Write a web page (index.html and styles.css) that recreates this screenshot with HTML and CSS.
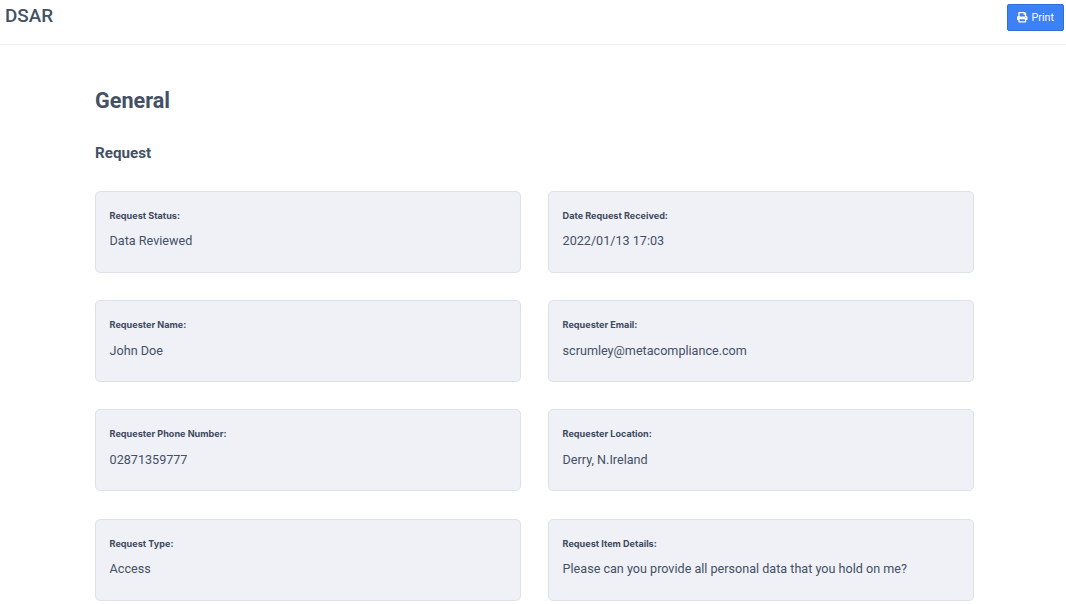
FILE: index.html
```html
<!DOCTYPE html>
<html lang="en">
<head>
<meta charset="utf-8">
<title>DSAR</title>
<link rel="stylesheet" href="styles.css">
</head>
<body>
<header class="topbar">
  <div class="brand">DSAR</div>
  <button class="print-btn" type="button">
    <svg class="print-icon" viewBox="0 0 512 512" aria-hidden="true"><path fill="currentColor" d="M448 192V77.25c0-8.49-3.37-16.62-9.37-22.63L393.37 9.37c-6-6-14.14-9.37-22.63-9.37H96C78.33 0 64 14.33 64 32v160c-35.35 0-64 28.65-64 64v112c0 8.84 7.16 16 16 16h48v96c0 17.67 14.33 32 32 32h320c17.67 0 32-14.33 32-32v-96h48c8.84 0 16-7.16 16-16V256c0-35.35-28.65-64-64-64zm-64 256H128v-96h256v96zm0-224H128V64h192v48c0 8.84 7.16 16 16 16h48v96zm48 72c-13.25 0-24-10.75-24-24 0-13.26 10.75-24 24-24s24 10.74 24 24c0 13.25-10.75 24-24 24z"/></svg>
    <span>Print</span>
  </button>
</header>
<main class="content">
  <h1 class="page-title">General</h1>
  <h2 class="section-title">Request</h2>
  <div class="grid">
    <div class="card"><div class="label">Request Status:</div><div class="value">Data Reviewed</div></div>
    <div class="card"><div class="label">Date Request Received:</div><div class="value">2022/01/13 17:03</div></div>
    <div class="card"><div class="label">Requester Name:</div><div class="value">John Doe</div></div>
    <div class="card"><div class="label">Requester Email:</div><div class="value">scrumley@metacompliance.com</div></div>
    <div class="card"><div class="label">Requester Phone Number:</div><div class="value">02871359777</div></div>
    <div class="card"><div class="label">Requester Location:</div><div class="value">Derry, N.Ireland</div></div>
    <div class="card"><div class="label">Request Type:</div><div class="value">Access</div></div>
    <div class="card"><div class="label">Request Item Details:</div><div class="value">Please can you provide all personal data that you hold on me?</div></div>
  </div>
</main>
</body>
</html>
```
FILE: styles.css
```css
* { box-sizing: border-box; }
html, body { margin: 0; height: 100%; overflow: hidden; background: #fff; }
body { font-family: Roboto, sans-serif; color: #445066; }
.topbar {
  height: 45px;
  padding: 4px 2px 0 5px;
  display: flex;
  justify-content: space-between;
  align-items: flex-start;
  border-bottom: 1px solid #edf0f5;
}
.brand { font-size: 18.9px; font-weight: 500; line-height: 24px; color: #445066; }
.print-btn {
  width: 57px;
  height: 27px;
  display: flex;
  align-items: center;
  justify-content: center;
  gap: 4px;
  padding: 0;
  background: #3b82f6;
  color: #fff;
  border: 1px solid #2f6fd6;
  border-radius: 2px;
  font: 400 10.7px Roboto, sans-serif;
}
.print-icon { width: 10.5px; height: 10.5px; }
.content { padding: 0 92px 0 95px; }
.page-title { margin: 42px 0 0; font-size: 21.6px; font-weight: 700; line-height: 28px; color: #445066; }
.section-title { margin: 28px 0 0; font-size: 15.2px; font-weight: 700; line-height: 20px; color: #445066; }
.grid {
  margin-top: 27.6px;
  display: grid;
  grid-template-columns: 426px 426px;
  column-gap: 27px;
  row-gap: 27.13px;
}
.card {
  height: 82.2px;
  padding: 18px 13.6px 0;
  background: #f0f1f7;
  border: 1px solid #dde1ec;
  border-radius: 5px;
}
.label { font-family: Inter, sans-serif; font-size: 9.1px; font-weight: 700; line-height: 12px; color: #3f4a60; }
.value { margin-top: 10.7px; font-size: 12.6px; line-height: 18px; color: #445066; }
```
